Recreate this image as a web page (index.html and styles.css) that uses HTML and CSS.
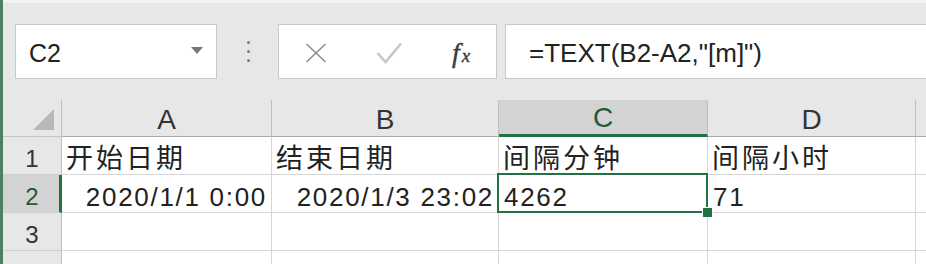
FILE: index.html
```html
<!DOCTYPE html>
<html lang="zh-CN">
<head>
<meta charset="utf-8">
<title>Excel</title>
<link rel="stylesheet" href="styles.css">
</head>
<body>
<div class="app">
  <div class="toolbar">
    <div class="namebox">
      <span class="name">C2</span>
      <span class="arrow"></span>
    </div>
    <div class="grip"><i></i><i></i><i></i></div>
    <div class="fbtns">
      <svg class="ico-x" width="22" height="20" viewBox="0 0 22 20"><path d="M1.5 1 L20.5 19 M20.5 1 L1.5 19" stroke="#8e8e8e" stroke-width="1.6" fill="none"/></svg>
      <svg class="ico-check" width="26" height="22" viewBox="0 0 26 22"><path d="M1.5 11 L9.5 20 L25 1.5" stroke="#c6c6c6" stroke-width="2.6" fill="none"/></svg>
      <span class="fx"><i>f</i><i class="fx-x">x</i></span>
    </div>
    <div class="formula">=TEXT(B2-A2,"[m]")</div>
  </div>
  <div class="sheet">
    <div class="hd corner"><svg width="21" height="21" viewBox="0 0 21 21"><path d="M21 0 L21 21 L0 21 Z" fill="#b8b8b8"/></svg></div>
    <div class="hd col">A</div>
    <div class="hd col">B</div>
    <div class="hd col sel-col">C</div>
    <div class="hd col">D</div>
    <div class="hd col last"></div>

    <div class="hd row">1</div>
    <div class="cell cjk">开始日期</div>
    <div class="cell cjk">结束日期</div>
    <div class="cell cjk">间隔分钟</div>
    <div class="cell cjk">间隔小时</div>
    <div class="cell last"></div>

    <div class="hd row sel-row">2</div>
    <div class="cell num right">2020/1/1 0:00</div>
    <div class="cell num right">2020/1/3 23:02</div>
    <div class="cell num active">4262<span class="selbox"></span><span class="handle"></span></div>
    <div class="cell num">71</div>
    <div class="cell last"></div>

    <div class="hd row">3</div>
    <div class="cell"></div>
    <div class="cell"></div>
    <div class="cell"></div>
    <div class="cell"></div>
    <div class="cell last"></div>

    <div class="hd row">4</div>
    <div class="cell"></div>
    <div class="cell"></div>
    <div class="cell"></div>
    <div class="cell"></div>
    <div class="cell last"></div>
  </div>
</div>
</body>
</html>
```

FILE: styles.css
```css
html, body {
  margin: 0;
  padding: 0;
  background: #ffffff;
  overflow: hidden;
}

.app {
  width: 926px;
  height: 264px;
  overflow: hidden;
  border-left: 3px solid #4d8063;
  box-sizing: border-box;
  font-family: "Liberation Sans", "Noto Sans CJK SC", sans-serif;
  color: #222;
}

/* ---------- toolbar ---------- */
.toolbar {
  height: 100px;
  box-sizing: border-box;
  background: #e7e7e7;
  border-top: 3px solid #f3f3f3;
  padding: 21px 0 0 12px;
  display: flex;
  align-items: flex-start;
}

.namebox {
  width: 202px;
  height: 55px;
  box-sizing: border-box;
  background: #fff;
  border: 1px solid #c8c8c8;
  display: flex;
  align-items: center;
  justify-content: space-between;
  padding: 0 13px 0 13px;
}

.name {
  font-size: 25px;
  color: #222;
  padding-top: 3px;
}

.arrow {
  width: 0;
  height: 0;
  border-left: 6.5px solid transparent;
  border-right: 6.5px solid transparent;
  border-top: 7px solid #777;
  margin-top: -3px;
}

.grip {
  margin-left: 30px;
  height: 55px;
  display: flex;
  flex-direction: column;
  justify-content: center;
  gap: 6px;
}

.grip i {
  display: block;
  width: 3px;
  height: 3px;
  border-radius: 50%;
  background: #7a7a7a;
}

.fbtns {
  margin-left: 28px;
  width: 219px;
  height: 55px;
  box-sizing: border-box;
  background: #fff;
  border: 1px solid #c8c8c8;
  display: flex;
  align-items: center;
  padding-left: 26px;
}

.ico-x {
  margin-top: 3px;
}

.ico-check {
  margin-left: 49px;
  margin-top: 3px;
}

.fx {
  margin-left: 50px;
  font-family: "Liberation Serif", serif;
  color: #3c3c3c;
  display: flex;
  align-items: baseline;
  margin-top: 2px;
}

.fx i {
  font-style: italic;
  font-size: 28px;
  font-weight: normal;
  -webkit-text-stroke: 0.4px #3c3c3c;
}

.fx .fx-x {
  font-size: 19px;
  margin-left: 2px;
}

.formula {
  margin-left: 8px;
  flex: 1;
  height: 55px;
  box-sizing: border-box;
  background: #fff;
  border: 1px solid #c8c8c8;
  border-right: none;
  padding: 3px 0 0 23px;
  display: flex;
  align-items: center;
  font-size: 26px;
  color: #222;
  white-space: nowrap;
}

/* ---------- sheet ---------- */
.sheet {
  display: grid;
  grid-template-columns: 59px 210px 227px 209px 208px 1fr;
  grid-template-rows: 37px 38px 38px 38px 38px;
}

.hd {
  background: #e7e7e7;
  box-sizing: border-box;
  border-right: 1px solid #bfbfbf;
  border-bottom: 1px solid #c6c6c6;
  color: #333;
  display: flex;
  justify-content: center;
  align-items: flex-end;
}

.corner {
  justify-content: flex-end;
  padding: 0 7px 6px 0;
}

.corner svg {
  display: block;
}

.col {
  font-size: 28px;
  line-height: 32px;
  border-bottom-color: #ababab;
}

.col.last {
  border-right: none;
}

.sel-col {
  background: #d3d3d3;
  border-bottom: 3px solid #217346;
  color: #1f5a3c;
  padding-top: 3px;
}

.row {
  font-size: 24px;
  line-height: 28px;
  padding-bottom: 1px;
  border-bottom-color: #cfcfcf;
}

.sel-row {
  background: #d3d3d3;
  border-right: 3px solid #217346;
  color: #1f5a3c;
  padding-left: 2px;
}

.cell {
  box-sizing: border-box;
  border-right: 1px solid #d6d6d6;
  border-bottom: 1px solid #d6d6d6;
  display: flex;
  align-items: flex-end;
  padding: 0 4px 0 5px;
  white-space: nowrap;
  color: #222;
  position: relative;
}

.cell.last {
  border-right: none;
}

.cjk {
  font-size: 27px;
  line-height: 30px;
  letter-spacing: 3px;
  padding-left: 4px;
}

.num {
  font-size: 26px;
  line-height: 30px;
  letter-spacing: 1.7px;
}

.right {
  justify-content: flex-end;
  padding-right: 4px;
}

.active {
  padding-left: 5px;
  z-index: 2;
}

.selbox {
  position: absolute;
  left: -2px;
  top: -2px;
  right: -1px;
  bottom: -1px;
  border: 2px solid #217346;
  pointer-events: none;
}

.handle {
  position: absolute;
  right: -6px;
  bottom: -6px;
  width: 9px;
  height: 9px;
  background: #217346;
  border: 1.5px solid #fff;
  box-sizing: content-box;
}
```
